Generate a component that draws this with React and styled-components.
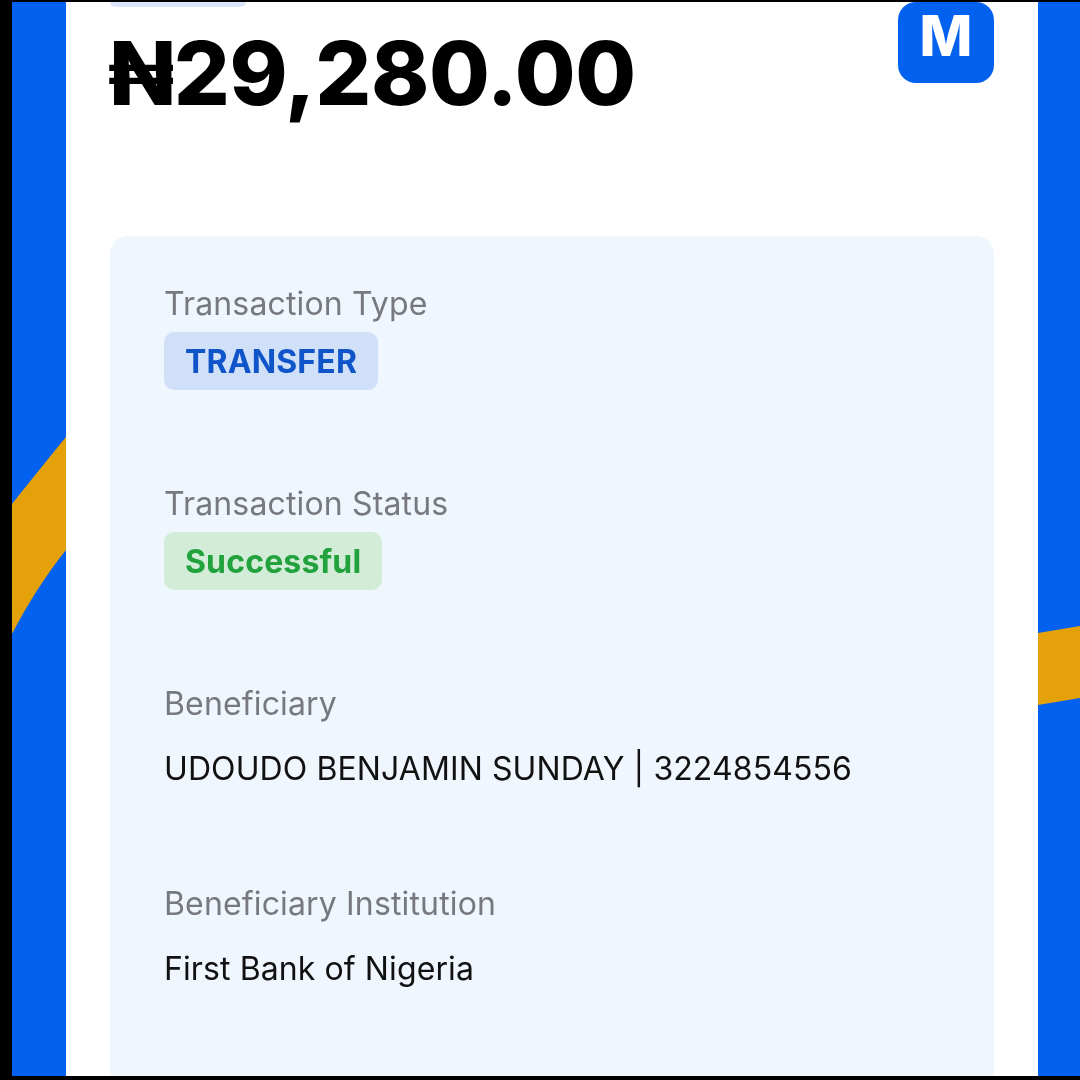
import styled, { createGlobalStyle } from "styled-components";

const GlobalStyle = createGlobalStyle`
    html, body {
        margin: 0;
        padding: 0;
        background: #000;
    }
    * {
        box-sizing: border-box;
    }
`

const Page = styled.div`
    display: flex;
    width: 1080px;
    height: 1080px;
    padding: 2px 0 4px 12px;
    overflow: hidden;
    background: #000;
    font-family: Inter, "Liberation Sans", sans-serif;
`

const Side = styled.div`
    flex: 0 0 ${props => props.$width}px;
    padding-top: ${props => props.$stripeTop}px;
    background: #0361f0;
`

const Stripe = styled.svg`
    display: block;
`

const Receipt = styled.main`
    flex: 1;
    min-width: 0;
    padding: 0 44px;
    overflow: hidden;
    background: #fff;
`

const TopPill = styled.div`
    width: 136px;
    height: 5px;
    border-radius: 0 0 10px 10px;
    background: #dbe6fb;
`

const Header = styled.div`
    display: flex;
    justify-content: space-between;
    align-items: flex-start;
    height: 229px;
`

const Amount = styled.div`
    margin: 18px 0 0 -2px;
    font-size: 88px;
    line-height: 97px;
    font-weight: 800;
    letter-spacing: -0.4px;
    color: #000;
    filter: blur(0.7px);
`

const Logo = styled.div`
    display: flex;
    justify-content: center;
    align-items: center;
    width: 96px;
    height: 81px;
    margin-top: -5px;
    padding-bottom: 13px;
    border-radius: 18px;
    background: #0361f0;
    color: #fff;
    font-size: 56px;
    font-weight: 800;
    filter: blur(0.7px);
`

const Panel = styled.section`
    padding: 0 50px 60px 54px;
    border-radius: 18px;
    background: #f0f6fe;
`

const Row = styled.div`
    height: 200px;
    padding-top: 49px;
    border-bottom: 2px solid #f3f7fe;
`

const Label = styled.div`
    font-size: 32px;
    line-height: 38px;
    letter-spacing: 0.15px;
    color: #77797f;
    filter: blur(0.6px);
`

const Badge = styled.span`
    display: inline-block;
    height: 58px;
    margin-top: 9px;
    padding: 0 21px;
    border-radius: 10px;
    font-size: 32px;
    line-height: 60px;
    font-weight: 700;
    letter-spacing: 0.15px;
    color: ${props => props.$color};
    background: ${props => props.$bg};
    filter: blur(0.6px);
`

const Value = styled.div`
    margin-top: 27px;
    font-size: 32px;
    line-height: 38px;
    letter-spacing: 0.1px;
    color: #111;
    filter: blur(0.5px);
`

const rows = [
    { label: 'Transaction Type', badge: 'TRANSFER', color: '#0f55c9', bg: '#d0e0f9' },
    { label: 'Transaction Status', badge: 'Successful', color: '#22a23c', bg: '#d2ecd8' },
    { label: 'Beneficiary', value: 'UDOUDO BENJAMIN SUNDAY | 3224854556' },
    { label: 'Beneficiary Institution', value: 'First Bank of Nigeria' },
]

const App = () => (
    <Page>
        <GlobalStyle />
        <Side $width={54} $stripeTop={435}>
            <Stripe width="54" height="198" viewBox="0 0 54 198">
                <path d="M0 67 C18 44 36 22 54 0 V113 C34 138 16 166 0 197 Z" fill="#e5a109" />
            </Stripe>
        </Side>
        <Receipt>
            <TopPill />
            <Header>
                <Amount>₦29,280.00</Amount>
                <Logo>M</Logo>
            </Header>
            <Panel>
                {rows.map(row => (
                    <Row key={row.label}>
                        <Label>{row.label}</Label>
                        {row.badge
                            ? <Badge $color={row.color} $bg={row.bg}>{row.badge}</Badge>
                            : <Value>{row.value}</Value>}
                    </Row>
                ))}
            </Panel>
        </Receipt>
        <Side $width={42} $stripeTop={624}>
            <Stripe width="42" height="81" viewBox="0 0 42 81">
                <path d="M0 7 L42 0 V72 L0 79 Z" fill="#e5a109" />
            </Stripe>
        </Side>
    </Page>
)

export default App
